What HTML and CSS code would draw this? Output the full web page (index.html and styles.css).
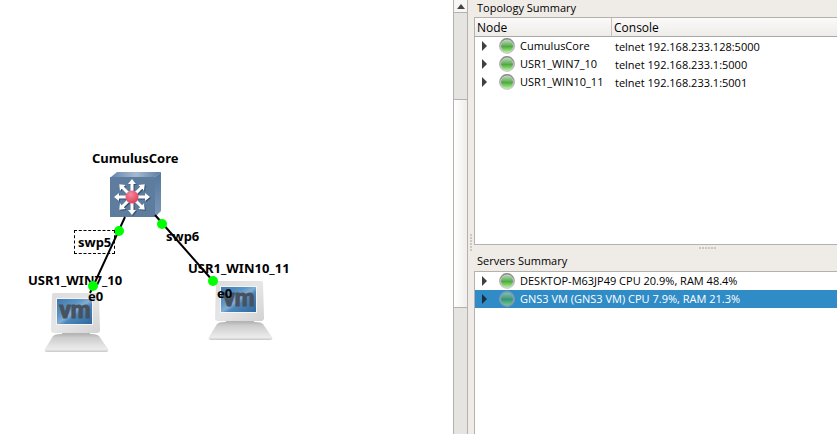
FILE: index.html
```html
<!DOCTYPE html>
<html lang="en">
<head>
<meta charset="utf-8">
<title>Network topology</title>
<link rel="stylesheet" href="styles.css">
</head>
<body>
<svg class="defs" aria-hidden="true">
  <defs>
    <linearGradient id="case" x1="0" y1="0" x2="1" y2="1"><stop offset="0" stop-color="#dcdcdc"/><stop offset=".5" stop-color="#e6e6e6"/><stop offset="1" stop-color="#d2d2d2"/></linearGradient>
    <linearGradient id="base" x1="0" y1="0" x2="0" y2="1"><stop offset="0" stop-color="#b4b4b4"/><stop offset=".2" stop-color="#cdcdcd"/><stop offset=".85" stop-color="#ececec"/><stop offset="1" stop-color="#c8c8c8"/></linearGradient>
    <linearGradient id="screen" x1="0" y1="0" x2="1" y2="1"><stop offset="0" stop-color="#4077ab"/><stop offset=".35" stop-color="#5c95c6"/><stop offset=".5" stop-color="#82aed4"/><stop offset=".6" stop-color="#4c86b9"/><stop offset="1" stop-color="#2f689f"/></linearGradient>
    <linearGradient id="top" x1="0" y1="0" x2="1" y2="0"><stop offset="0" stop-color="#6787ab"/><stop offset=".5" stop-color="#a4bad1"/><stop offset="1" stop-color="#5a7ba0"/></linearGradient>
    <linearGradient id="side" x1="0" y1="0" x2="0" y2="1"><stop offset="0" stop-color="#54769c"/><stop offset="1" stop-color="#7c98b7"/></linearGradient>
    <radialGradient id="hub" cx=".4" cy=".3" r=".7"><stop offset="0" stop-color="#f58a9b"/><stop offset="1" stop-color="#df405c"/></radialGradient>
    <linearGradient id="lamp" x1="0" y1="0" x2="0" y2="1"><stop offset="0" stop-color="#b4dbae"/><stop offset=".45" stop-color="#68b060"/><stop offset=".52" stop-color="#4ea444"/><stop offset="1" stop-color="#98f574"/></linearGradient>
    <linearGradient id="lamp-selected" x1="0" y1="0" x2="0" y2="1"><stop offset="0" stop-color="#82bda9"/><stop offset=".45" stop-color="#469b80"/><stop offset=".52" stop-color="#35917a"/><stop offset="1" stop-color="#6acb82"/></linearGradient>
    <linearGradient id="ring" x1="0" y1="0" x2="0" y2="1"><stop offset="0" stop-color="#858585"/><stop offset="1" stop-color="#d0d0d0"/></linearGradient>
    <symbol id="led" viewBox="0 0 16 16"><circle cx="8" cy="8" r="7.2" fill="#d4d4d4" stroke="url(#ring)" stroke-width="1.5"/><circle cx="8" cy="8" r="6" fill="url(#lamp)"/></symbol>
    <symbol id="led-selected" viewBox="0 0 16 16"><circle cx="8" cy="8" r="7.2" fill="#82aabe" stroke="#7d9caf" stroke-width="1.5"/><circle cx="8" cy="8" r="6" fill="url(#lamp-selected)"/></symbol>
    <symbol id="computer" viewBox="0 0 66 60">
      <path d="M18 38h28v5H18z" fill="#b4b4b4"/>
      <path d="M17 41h30q6 0 8 2l9 13q1 3-2 3H3q-3 0-2-3l8-13q2-2 8-2z" fill="url(#base)"/>
      <path d="M10 0h43q2 0 2 2l1 35q0 3-3 3H10q-3 0-3-3L8 2q0-2 2-2z" fill="url(#case)"/>
      <path d="M12 5h37v27H12z" fill="#f4f4f4"/>
      <path d="M13 6h35v25H13z" fill="url(#screen)"/>
      <text class="screen-text" x="31" y="25" text-anchor="middle">vm</text>
    </symbol>
    <g id="arrow"><path d="M-1.5-4v-9h-2.5l4-5 4 5H1.5v9z"/></g>
  </defs>
</svg>
<div class="window">
  <main class="canvas">
    <svg class="node-icon core" viewBox="0 0 52 48" aria-label="Multilayer switch">
      <path d="M1 6l6-5h44l-6 5z" fill="url(#top)"/>
      <path d="M45 6l6-5v39l-6 6z" fill="url(#side)"/>
      <path d="M0 6h45v40H0z" fill="#5d7c9e"/>
      <g transform="translate(22 26)">
        <g fill="#36506c" transform="translate(1 1)"><use href="#arrow"/><use href="#arrow" transform="rotate(45)"/><use href="#arrow" transform="rotate(90)"/><use href="#arrow" transform="rotate(135)"/><use href="#arrow" transform="rotate(180)"/><use href="#arrow" transform="rotate(225)"/><use href="#arrow" transform="rotate(270)"/><use href="#arrow" transform="rotate(315)"/></g>
        <g fill="#fff"><use href="#arrow"/><use href="#arrow" transform="rotate(45)"/><use href="#arrow" transform="rotate(90)"/><use href="#arrow" transform="rotate(135)"/><use href="#arrow" transform="rotate(180)"/><use href="#arrow" transform="rotate(225)"/><use href="#arrow" transform="rotate(270)"/><use href="#arrow" transform="rotate(315)"/></g>
        <circle r="6.5" fill="url(#hub)"/>
      </g>
    </svg>
    <svg class="node-icon pc pc-a" aria-label="Virtual machine"><use href="#computer"/></svg>
    <svg class="node-icon pc pc-b" aria-label="Virtual machine"><use href="#computer"/></svg>
    <span class="label name-core">CumulusCore</span>
    <span class="label name-a">USR1_WIN7_10</span>
    <span class="label name-b">USR1_WIN10_11</span>
    <svg class="links" aria-hidden="true">
      <path d="M125 217L90 293M155 215L213 281" stroke="#000" stroke-width="2"/>
      <g fill="#0f0"><circle cx="119" cy="231" r="5"/><circle cx="162" cy="224" r="5"/><circle cx="93" cy="286" r="5"/><circle cx="213" cy="281" r="5"/></g>
    </svg>
    <span class="label port-selected">swp5</span>
    <span class="label port-core">swp6</span>
    <span class="label port-a">e0</span>
    <span class="label port-b">e0</span>
  </main>
  <div class="scrollbar">
    <button class="scroll-up" aria-label="Scroll up"><svg width="8" height="5" viewBox="0 0 8 5"><path d="M4 0l4 5H0z" fill="#444"/></svg></button>
    <div class="track-before"></div>
    <div class="thumb"></div>
    <div class="track-after"></div>
  </div>
  <div class="splitter"><i class="grip"></i></div>
  <aside class="docks">
    <section class="dock topology">
      <h2>Topology Summary</h2>
      <div class="view">
        <table>
          <thead><tr><th class="node-column">Node</th><th>Console</th></tr></thead>
          <tbody>
            <tr><td><div class="item"><button class="expand" aria-label="Expand"></button><svg class="led"><use href="#led"/></svg>CumulusCore</div></td><td>telnet 192.168.233.128:5000</td></tr>
            <tr><td><div class="item"><button class="expand" aria-label="Expand"></button><svg class="led"><use href="#led"/></svg>USR1_WIN7_10</div></td><td>telnet 192.168.233.1:5000</td></tr>
            <tr><td><div class="item"><button class="expand" aria-label="Expand"></button><svg class="led"><use href="#led"/></svg>USR1_WIN10_11</div></td><td>telnet 192.168.233.1:5001</td></tr>
          </tbody>
        </table>
      </div>
    </section>
    <div class="row-splitter"><i class="grip"></i></div>
    <section class="dock servers">
      <h2>Servers Summary</h2>
      <ul class="view">
        <li class="item"><button class="expand" aria-label="Expand"></button><svg class="led"><use href="#led"/></svg>DESKTOP-M63JP49 CPU 20.9%, RAM 48.4%</li>
        <li class="item selected"><button class="expand" aria-label="Expand"></button><svg class="led"><use href="#led-selected"/></svg>GNS3 VM (GNS3 VM) CPU 7.9%, RAM 21.3%</li>
      </ul>
    </section>
  </aside>
</div>
</body>
</html>
```
FILE: styles.css
```css
* { box-sizing: border-box; }
body { margin: 0; background: #efebe7; color: #000; font: 11px/18px "Open Sans", "Noto Sans", sans-serif; }
button { padding: 0; border: 0; background: none; }
.defs { position: absolute; width: 0; height: 0; }
.window { display: grid; grid-template-columns: minmax(0, 453fr) 15px 6px minmax(0, 363fr); height: 100vh; }

.canvas { position: relative; overflow: hidden; background: #fff; }
.links { position: absolute; inset: 0; width: 100%; height: 100%; }
.node-icon { position: absolute; }
.core { left: 110px; top: 171px; width: 52px; height: 48px; }
.pc { width: 66px; height: 60px; }
.pc-a { left: 44px; top: 293px; }
.pc-b { left: 208px; top: 281px; }
.screen-text { font: 700 23px Roboto, sans-serif; fill: #48525e; stroke: #48525e; stroke-linejoin: round; }
.label { position: absolute; font: bold 13px/16px "Noto Sans", sans-serif; white-space: nowrap; }
.name-core { left: 92px; top: 150px; }
.name-a { left: 28px; top: 272px; }
.name-b { left: 188px; top: 260px; }
.port-selected { left: 74px; top: 230px; padding: 3px; border: 1px dashed #000; }
.port-core { left: 166px; top: 228px; }
.port-a { left: 88px; top: 288px; }
.port-b { left: 217px; top: 285px; }

.scrollbar { display: flex; flex-direction: column; border: solid #b5b2ae; border-width: 0 1px; background: #e5e4e0; }
.scroll-up { display: grid; place-items: center; height: 13px; border-bottom: 1px solid #b5b2ae; background: #f7f6f4; }
.track-before { flex: 86 0 0; }
.thumb { flex: 208 0 0; border: solid #b5b2ae; border-width: 1px 0; background: linear-gradient(90deg, #fff, #efeeec); }
.track-after { flex: 127 0 0; }

.splitter { display: flex; align-items: center; justify-content: center; padding-top: 50px; }
.grip { background: radial-gradient(circle at 1px 1px, #cbc7c2 1px, transparent 1px) 0 0 / 3px 3px; }
.splitter .grip { width: 2px; height: 17px; }
.row-splitter { display: flex; justify-content: center; padding-top: 2px; height: 8px; padding-left: 104px; }
.row-splitter .grip { width: 17px; height: 2px; }

.docks { display: flex; flex-direction: column; min-width: 0; }
.dock { display: flex; flex-direction: column; min-height: 0; }
.topology { flex: 245 0 0; }
.servers { flex: 181 0 0; }
h2 { margin: 0; padding: 0 0 2px 3px; font-size: 11px; font-weight: 400; line-height: 15px; }
.view { flex: 1; margin: 0; padding: 0; border: solid #b5b2ae; border-width: 1px 0 1px 1px; background: #fff; list-style: none; overflow: hidden; }
.servers .view { border-bottom: 0; }
table { width: 100%; border-collapse: separate; border-spacing: 0; table-layout: fixed; }
th { height: 19px; padding: 2px 2px 0; border-bottom: 1px solid #aaa8a5; background: linear-gradient(#fbfaf8, #eeece9); font-size: 12px; font-weight: 400; line-height: 16px; text-align: left; }
.node-column { width: 137px; border-right: 1px solid #c5c2be; }
td { height: 18px; padding: 2px 3px 0; line-height: 16px; white-space: nowrap; }
td:first-child { padding: 0; }
.item { display: flex; align-items: center; height: 18px; padding-left: 7px; white-space: nowrap; }
td .item { line-height: 18px; }
.expand { width: 5px; height: 10px; margin-right: 12px; background: #404040; clip-path: polygon(0 0, 100% 50%, 0 100%); }
.led { width: 16px; height: 16px; margin-right: 5px; }
.servers h2 { line-height: 16px; }
.selected { background: #308cc6; color: #fff; }
.selected .expand { background: #18303f; }
```
